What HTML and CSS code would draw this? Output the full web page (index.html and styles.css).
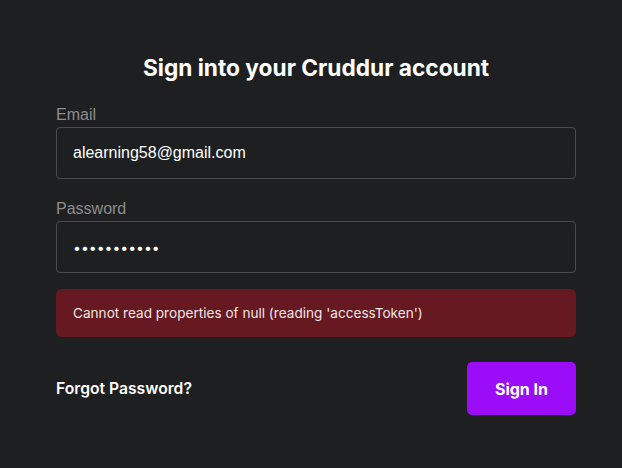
FILE: index.html
```html
<!DOCTYPE html>
<html>
<head>
<meta charset="utf-8">
<link rel="stylesheet" href="styles.css">
</head>
<body>
<main class="card">
  <h1 class="title">Sign into your Cruddur account</h1>
  <div class="field">
    <label class="label">Email</label>
    <div class="input">alearning58@gmail.com</div>
  </div>
  <div class="field">
    <label class="label">Password</label>
    <div class="input dots">•••••••••••</div>
  </div>
  <div class="error">Cannot read properties of null (reading 'accessToken')</div>
  <div class="actions">
    <a class="forgot">Forgot Password?</a>
    <button class="submit">Sign In</button>
  </div>
</main>
</body>
</html>
```
FILE: styles.css
```css
html, body {
  margin: 0;
  padding: 0;
  background: #1e1f21;
  font-family: Inter, "Noto Sans", sans-serif;
  color: #ffffff;
}
.card {
  width: 520px;
  margin: 0 0 0 56px;
  padding-top: 54px;
  display: flex;
  flex-direction: column;
}
.title {
  margin: 0;
  font-size: 22.7px;
  line-height: 28px;
  font-weight: 700;
  text-align: center;
}
.field {
  display: flex;
  flex-direction: column;
  margin-top: 21px;
}
.field + .field {
  margin-top: 18px;
}
.label {
  font-family: "Liberation Sans", Arial, sans-serif;
  font-size: 16px;
  line-height: 24px;
  color: #8d8d8f;
}
.input {
  box-sizing: border-box;
  height: 52px;
  border: 1px solid #4a4a4c;
  border-radius: 4px;
  padding: 0 16px;
  display: flex;
  align-items: center;
  font-family: "Liberation Sans", Arial, sans-serif;
  font-size: 16px;
  color: #ffffff;
}
.dots {
  font-family: Inter, sans-serif;
  font-size: 14px;
}
.error {
  margin-top: 16px;
  box-sizing: border-box;
  height: 48px;
  border-radius: 6px;
  background: #661920;
  padding: 0 17px;
  display: flex;
  align-items: center;
  font-size: 13.6px;
  color: #f2e6e7;
}
.actions {
  margin-top: 25px;
  display: flex;
  align-items: center;
  justify-content: space-between;
}
.forgot {
  font-size: 15.7px;
  font-weight: 600;
  color: #ffffff;
}
.submit {
  width: 109px;
  height: 53px;
  border: none;
  border-radius: 5px;
  background: #9b0cf8;
  color: #ffffff;
  font-family: Inter, sans-serif;
  font-size: 16px;
  font-weight: 700;
}
```
